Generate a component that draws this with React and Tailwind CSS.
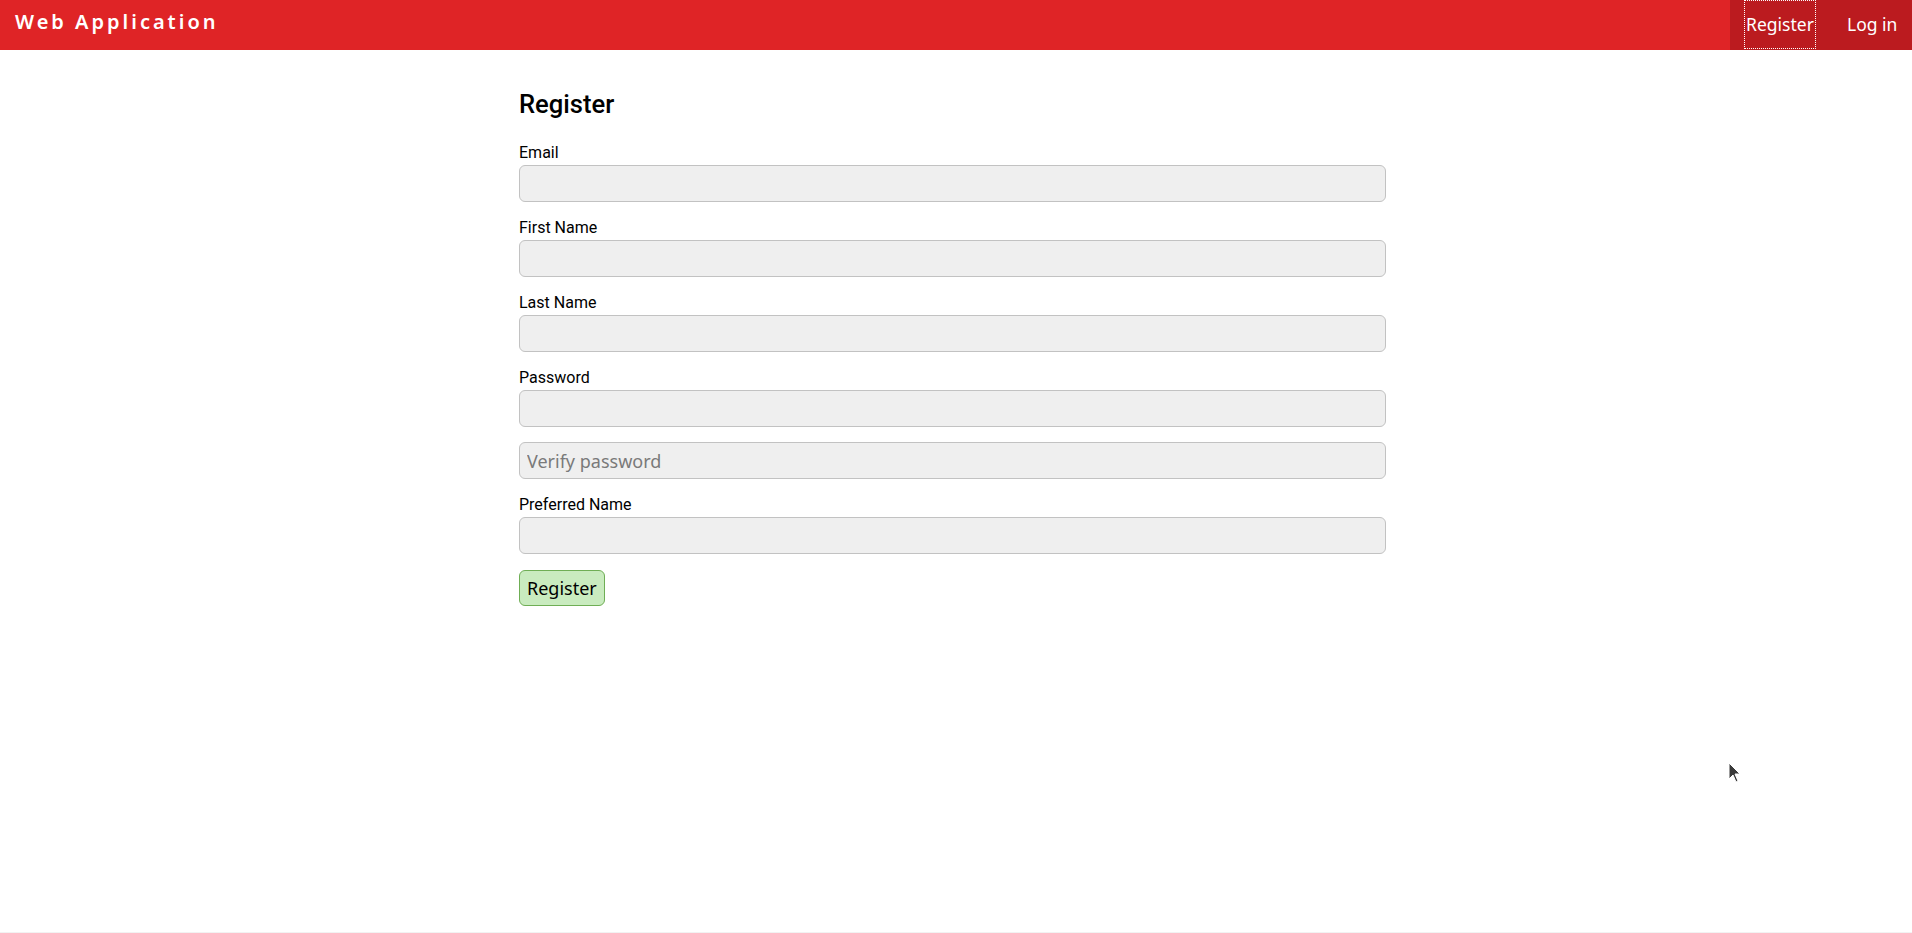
export default function App() {
  const fields = [
    { label: "Email", type: "email" },
    { label: "First Name", type: "text" },
    { label: "Last Name", type: "text" },
    { label: "Password", type: "password" },
  ];
  const inputCls =
    "block w-full h-[37px] rounded-[6px] border border-[#c2c2c2] bg-[#efefef] px-[7px] text-[18px] text-black placeholder:text-[#7a7a7a] outline-none [font-family:'Noto_Sans',sans-serif]";
  return (
    <div className="relative min-h-screen h-[933px] bg-white border-b border-[#f2f2f2] [font-family:Roboto,sans-serif]">
      <header className="flex h-[50px] items-stretch justify-between bg-[#df2426] text-white [font-family:'Noto_Sans',sans-serif]">
        <div className="pl-[15px] pt-[8px] text-[20px] font-semibold tracking-[3px] leading-[27px]">
          Web Application
        </div>
        <nav className="flex w-[182px] items-stretch bg-[#bb1b1f] pl-[14px] text-[17.5px]">
          <a className="flex h-[49px] w-[72px] items-center justify-center outline-1 outline-dotted outline-white -outline-offset-1">
            Register
          </a>
          <a className="flex h-[49px] flex-1 items-center pl-[31px]">Log in</a>
        </nav>
      </header>
      <main className="mx-auto w-[874px] pr-[7px] pt-[40px]">
        <h2 className="text-[25.6px] font-medium leading-[28px] text-black mb-[25px]">Register</h2>
        <form onSubmit={(e) => e.preventDefault()}>
          {fields.map((f) => (
            <div key={f.label} className="mb-[16px]">
              <label className="block text-[16px] leading-[19px] text-black mb-[3px]">{f.label}</label>
              <input type={f.type} className={inputCls} />
            </div>
          ))}
          <div className="mb-[16px] -mt-[1px]">
            <input type="password" placeholder="Verify password" className={inputCls} />
          </div>
          <div className="mb-[16px]">
            <label className="block text-[16px] leading-[19px] text-black mb-[3px]">Preferred Name</label>
            <input type="text" className={inputCls} />
          </div>
          <button
            type="submit"
            className="h-[36px] rounded-[6px] border border-[#6fae55] bg-[#c9ebbf] px-[7px] text-[18px] text-black [font-family:'Noto_Sans',sans-serif]"
          >
            Register
          </button>
        </form>
      </main>
      <svg
        className="absolute left-[1728px] top-[762px]"
        width="14"
        height="22"
        viewBox="0 0 14 22"
      >
        <path d="M1 1 L1 17 L5 13 L8 20 L10 19 L7 12 L12 12 Z" fill="#3a3a3a" stroke="#ffffff" strokeWidth="1" />
      </svg>
    </div>
  );
}
